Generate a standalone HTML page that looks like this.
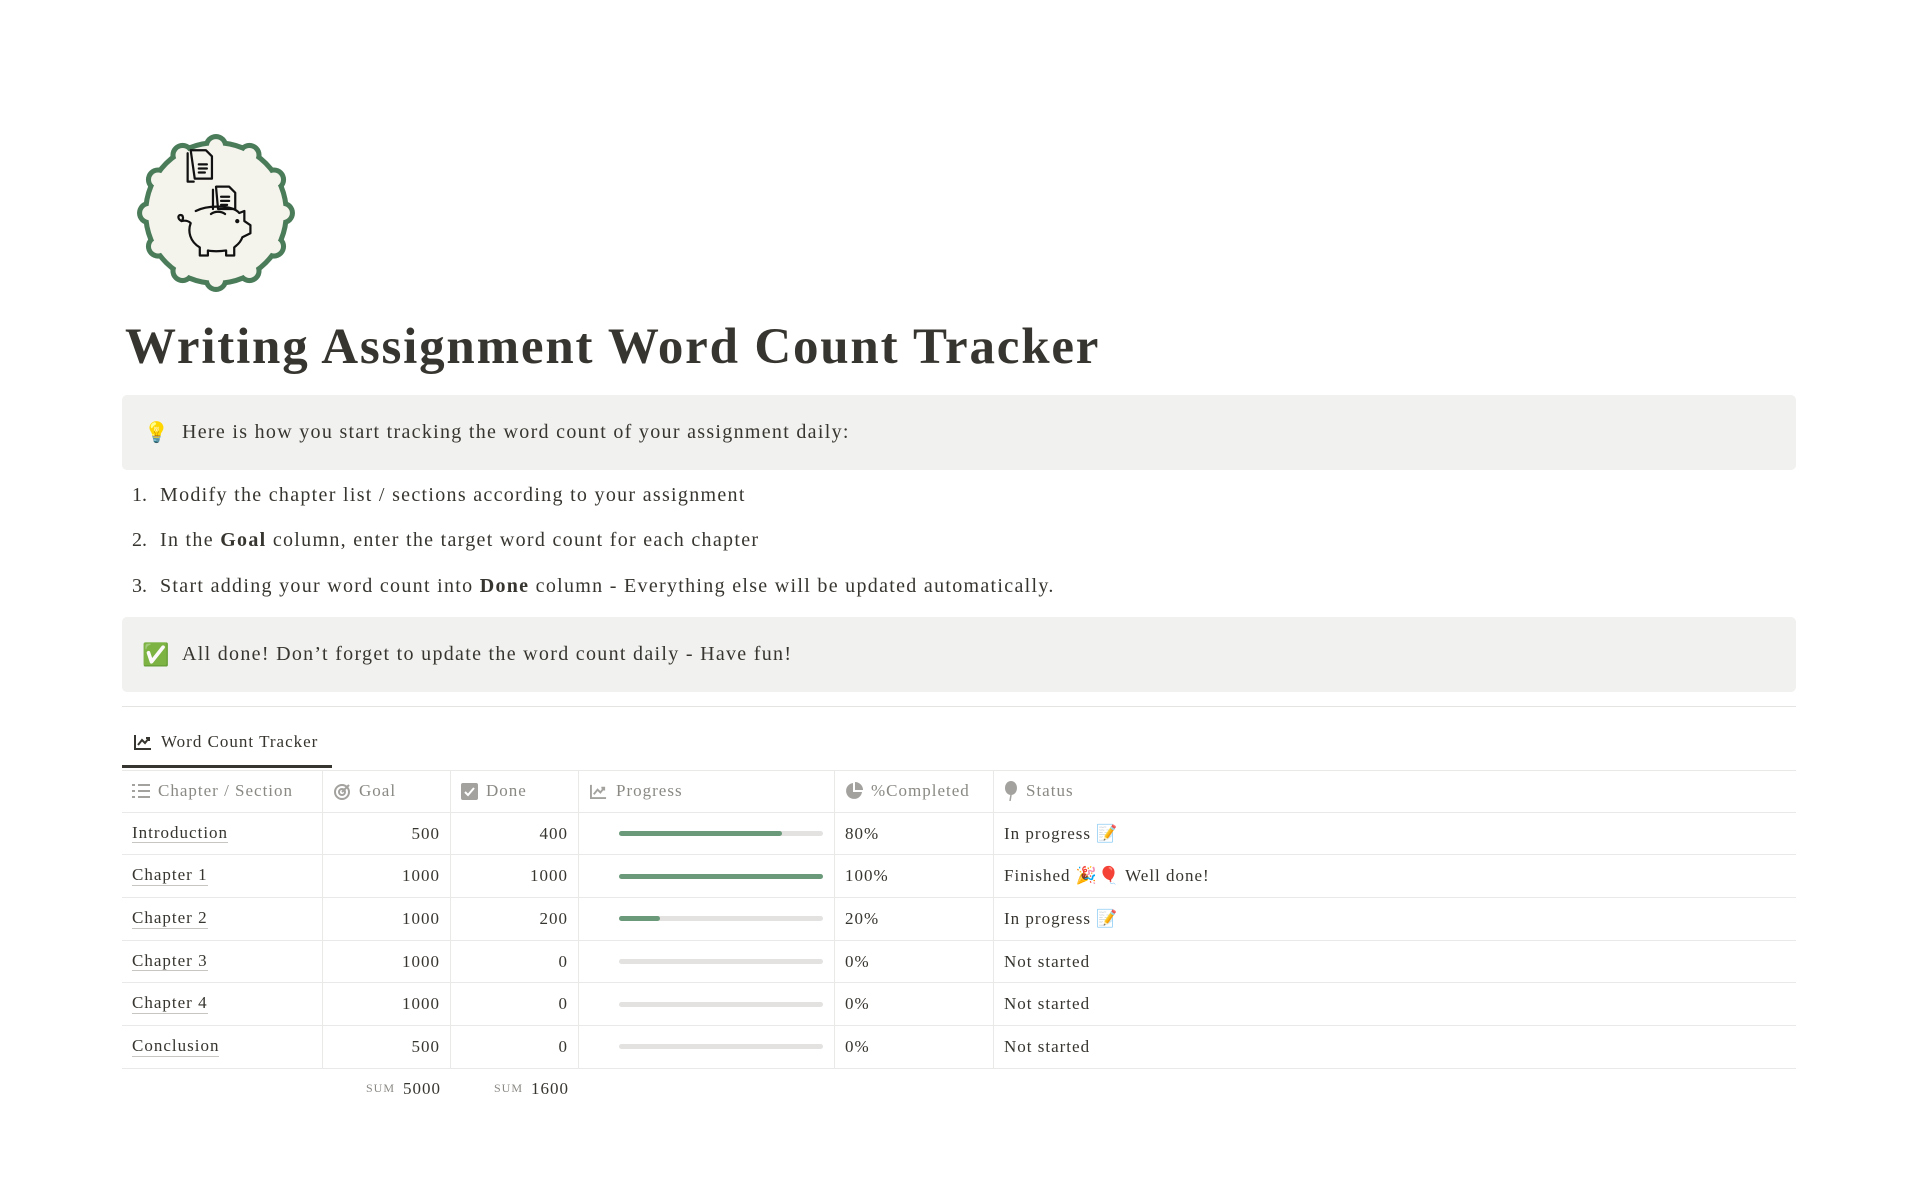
<!DOCTYPE html>
<html><head><meta charset="utf-8">
<style>
*{margin:0;padding:0;box-sizing:border-box}
body{width:1920px;height:1199px;background:#fff;font-family:"Liberation Serif",serif;color:#37352f;position:relative;overflow:hidden}
.abs{position:absolute}
h1{position:absolute;left:125px;top:318px;font-size:51px;font-weight:bold;letter-spacing:1.8px;color:#37352f;white-space:nowrap}
.callout{position:absolute;left:122px;width:1674px;background:#f1f1ef;border-radius:5px;font-size:20px;display:flex;align-items:center;letter-spacing:1.3px}
.li{position:absolute;left:132px;font-size:20px;white-space:nowrap;letter-spacing:1.3px}
.li .n{display:inline-block;width:28px;letter-spacing:0}
.tbl{position:absolute;left:122px;top:770px;width:1674px;font-size:17px;letter-spacing:1px}
.row{display:flex;height:42.7px;border-bottom:1px solid #e9e9e7}
.row.h{border-top:1px solid #e9e9e7;color:#8a8984}
.c{border-right:1px solid #e9e9e7;display:flex;align-items:center;padding:0 10px;white-space:nowrap}
.c:last-child{border-right:none}
.w1{width:201px}.w2{width:128px}.w3{width:128px}.w4{width:256px}.w5{width:159px}.w6{flex:1}
.r{justify-content:flex-end}
.u{border-bottom:1px solid #c7c6c3;line-height:1.1}
.bar{width:204px;height:5px;background:#e3e2e0;border-radius:3px;margin-left:30px;position:relative}
.bar i{position:absolute;left:0;top:0;bottom:0;background:#6a9a7a;border-radius:3px}
.hi{display:inline-block;margin-right:8px;vertical-align:middle}
</style></head><body>

<svg class="abs" style="left:135px;top:132px" width="162" height="162" viewBox="0 0 160 160">
<g fill="#4a7c59">
<circle cx="80" cy="80" r="72"/>
<circle cx="146" cy="80" r="12"/><circle cx="137.2" cy="113" r="12"/><circle cx="113" cy="137.2" r="12"/><circle cx="80" cy="146" r="12"/><circle cx="47" cy="137.2" r="12"/><circle cx="22.8" cy="113" r="12"/><circle cx="14" cy="80" r="12"/><circle cx="22.8" cy="47" r="12"/><circle cx="47" cy="22.8" r="12"/><circle cx="80" cy="14" r="12"/><circle cx="113" cy="22.8" r="12"/><circle cx="137.2" cy="47" r="12"/>
</g>
<g fill="#f4f3ec">
<circle cx="80" cy="80" r="67"/>
<circle cx="146" cy="80" r="7"/><circle cx="137.2" cy="113" r="7"/><circle cx="113" cy="137.2" r="7"/><circle cx="80" cy="146" r="7"/><circle cx="47" cy="137.2" r="7"/><circle cx="22.8" cy="113" r="7"/><circle cx="14" cy="80" r="7"/><circle cx="22.8" cy="47" r="7"/><circle cx="47" cy="22.8" r="7"/><circle cx="80" cy="14" r="7"/><circle cx="113" cy="22.8" r="7"/><circle cx="137.2" cy="47" r="7"/>
</g>
<g fill="none" stroke="#111" stroke-width="2.2" stroke-linejoin="round" stroke-linecap="round">
<path d="M55 18 L70 18 L76 24 L76 46 L59 46 Z"/><path d="M52 21 L52 49 L58 49"/><path d="M63 32h8M63 36h8M63 40h6"/>
<path d="M80 54 L93 54 L99 60 L99 76 L82 76 Z"/><path d="M77 57 L77 76"/><path d="M85 64h8M85 68h8M85 72h6"/>
<path d="M60 78 C72 72 96 72 103 80 L108 78 L108 88 L114 92 L114 100 L106 104 C104 110 100 112 98 114 L98 122 L90 122 L90 117 C84 118 76 118 72 117 L72 122 L64 122 L64 114 C54 108 52 98 55 90 C53 88 50 87 46 88 M46 88 C42 86 42 82 45 82 C48 82 48 86 46 88"/>
<path d="M75 81 C79 78 85 78 89 81"/><circle cx="101" cy="88" r="1" fill="#111"/>
</g>
</svg>

<h1>Writing Assignment Word Count Tracker</h1>

<div class="callout" style="top:395px;height:75px"><span style="margin-left:22px;width:38px;font-size:20px">💡</span><span>Here is how you start tracking the word count of your assignment daily:</span></div>

<div class="li" style="top:484px"><span class="n">1.</span>Modify the chapter list / sections according to your assignment</div>
<div class="li" style="top:529px"><span class="n">2.</span>In the <b>Goal</b> column, enter the target word count for each chapter</div>
<div class="li" style="top:575px"><span class="n">3.</span>Start adding your word count into <b>Done</b> column - Everything else will be updated automatically.</div>

<div class="callout" style="top:617px;height:75px"><span style="margin-left:20px;width:40px;font-size:22px">✅</span><span>All done! Don’t forget to update the word count daily - Have fun!</span></div>

<div class="abs" style="left:122px;top:706px;width:1674px;height:1px;background:#e4e4e2"></div>

<div class="abs" style="left:133px;top:732px;font-size:17px;letter-spacing:1px;display:flex;align-items:center">
<svg width="20" height="18" viewBox="0 0 20 18" style="margin-right:8px"><path d="M2 2V16H18" fill="none" stroke="#37352f" stroke-width="2"/><path d="M5 12L9 7L12 10L16 5M13 5H16V8" fill="none" stroke="#37352f" stroke-width="2"/></svg>Word Count Tracker</div>
<div class="abs" style="left:122px;top:765px;width:210px;height:3px;background:#37352f"></div>

<div class="tbl">
<div class="row h">
<div class="c w1"><svg class="hi" width="18" height="16" viewBox="0 0 18 16"><g fill="#a3a29e"><rect x="0" y="1" width="3" height="2"/><rect x="0" y="7" width="3" height="2"/><rect x="0" y="13" width="3" height="2"/><rect x="6" y="1" width="12" height="2"/><rect x="6" y="7" width="12" height="2"/><rect x="6" y="13" width="12" height="2"/></g></svg>Chapter / Section</div>
<div class="c w2"><svg class="hi" width="18" height="18" viewBox="0 0 18 18"><g fill="none" stroke="#a3a29e" stroke-width="2"><circle cx="9" cy="10" r="7"/><circle cx="9" cy="10" r="3"/><path d="M9 10L16 3"/></g></svg>Goal</div>
<div class="c w3"><svg class="hi" width="17" height="17" viewBox="0 0 17 17"><rect width="17" height="17" rx="2" fill="#a3a29e"/><path d="M4 9l3 3 6-7" fill="none" stroke="#fff" stroke-width="2"/></svg>Done</div>
<div class="c w4"><svg class="hi" width="19" height="17" viewBox="0 0 20 18"><path d="M2 2V16H18" fill="none" stroke="#a3a29e" stroke-width="2"/><path d="M5 12L9 7L12 10L16 5M13 5H16V8" fill="none" stroke="#a3a29e" stroke-width="2"/></svg>Progress</div>
<div class="c w5"><svg class="hi" width="18" height="18" viewBox="0 0 18 18"><path d="M8 1A8 8 0 1 0 17 10H8Z" fill="#a3a29e"/><path d="M10 0A8 8 0 0 1 18 8H10Z" fill="#a3a29e"/></svg>%Completed</div>
<div class="c w6"><svg class="hi" width="14" height="20" viewBox="0 0 14 20"><ellipse cx="7" cy="7" rx="6" ry="7" fill="#a3a29e"/><path d="M7 14L6 20" stroke="#a3a29e" stroke-width="1.5"/></svg>Status</div>
</div>
<div class="row"><div class="c w1"><span class="u">Introduction</span></div><div class="c w2 r">500</div><div class="c w3 r">400</div><div class="c w4"><div class="bar"><i style="width:80%"></i></div></div><div class="c w5">80%</div><div class="c w6">In progress 📝</div></div>
<div class="row"><div class="c w1"><span class="u">Chapter 1</span></div><div class="c w2 r">1000</div><div class="c w3 r">1000</div><div class="c w4"><div class="bar"><i style="width:100%"></i></div></div><div class="c w5">100%</div><div class="c w6">Finished 🎉🎈 Well done!</div></div>
<div class="row"><div class="c w1"><span class="u">Chapter 2</span></div><div class="c w2 r">1000</div><div class="c w3 r">200</div><div class="c w4"><div class="bar"><i style="width:20%"></i></div></div><div class="c w5">20%</div><div class="c w6">In progress 📝</div></div>
<div class="row"><div class="c w1"><span class="u">Chapter 3</span></div><div class="c w2 r">1000</div><div class="c w3 r">0</div><div class="c w4"><div class="bar"></div></div><div class="c w5">0%</div><div class="c w6">Not started</div></div>
<div class="row"><div class="c w1"><span class="u">Chapter 4</span></div><div class="c w2 r">1000</div><div class="c w3 r">0</div><div class="c w4"><div class="bar"></div></div><div class="c w5">0%</div><div class="c w6">Not started</div></div>
<div class="row"><div class="c w1"><span class="u">Conclusion</span></div><div class="c w2 r">500</div><div class="c w3 r">0</div><div class="c w4"><div class="bar"></div></div><div class="c w5">0%</div><div class="c w6">Not started</div></div>
<div style="display:flex;height:40px;border:none">
<div class="c w1" style="border:none"></div>
<div class="c w2 r" style="border:none"><span style="font-size:12px;color:#8a8984;margin-right:8px;letter-spacing:1px">SUM</span>5000</div>
<div class="c w3 r" style="border:none"><span style="font-size:12px;color:#8a8984;margin-right:8px;letter-spacing:1px">SUM</span>1600</div>
</div>
</div>
</body></html>
